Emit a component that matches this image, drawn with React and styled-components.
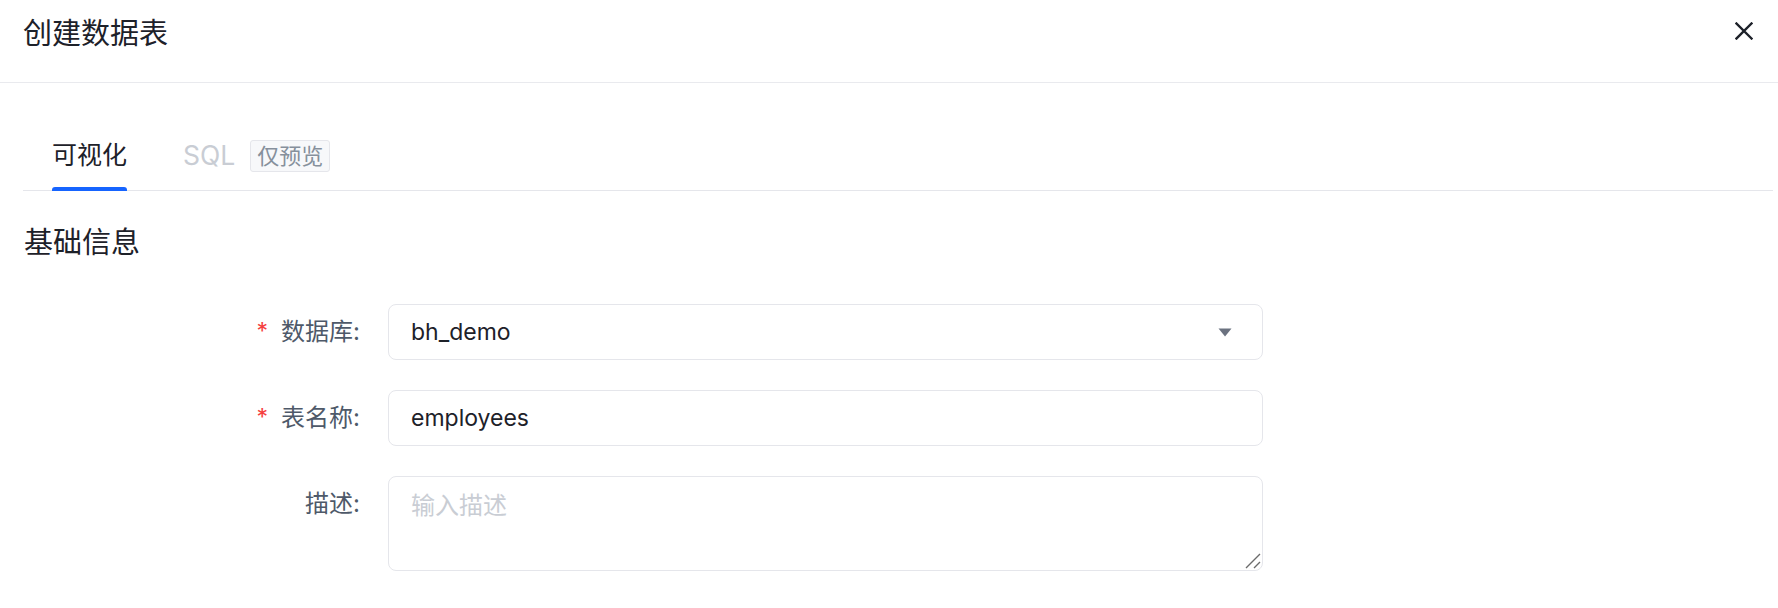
import React from "react";
import styled, { createGlobalStyle } from "styled-components";

const Global = createGlobalStyle`
  html, body { margin: 0; padding: 0; background: #fff; }
  body {
    font-family: Inter, "Noto Sans CJK SC", "Noto Sans", sans-serif;
    color: #1d2129;
  }
  * { box-sizing: border-box; }
`;

const Page = styled.div`
  width: 1778px;
  height: 608px;
  overflow: hidden;
  background: #fff;
`;

const Header = styled.header`
  height: 83px;
  padding: 14px 25px 0 23px;
  border-bottom: 1px solid #e9eaee;
  display: flex;
  justify-content: space-between;
  align-items: flex-start;
`;

const Title = styled.h1`
  margin: 0;
  font-size: 29px;
  line-height: 40px;
  font-weight: 400;
  color: #1d2129;
`;

const CloseButton = styled.button`
  border: 0;
  background: transparent;
  padding: 0;
  margin-top: 8px;
  width: 18px;
  height: 18px;
  display: flex;
  cursor: pointer;
`;

const Body = styled.div`
  padding: 54px 5px 0 23px;
`;

const TabList = styled.div`
  display: flex;
  align-items: flex-start;
  padding-left: 29px;
  border-bottom: 1px solid #e5e6eb;
`;

const Tab = styled.div`
  position: relative;
  display: flex;
  align-items: center;
  gap: 15px;
  font-size: 25px;
  line-height: 36px;
  padding-bottom: 17px;
  margin-right: 56px;
  color: ${(p) => (p.$active ? "#1d2129" : "#c9cdd4")};
  cursor: pointer;
`;

const TabLatin = styled.span`
  font-size: 26.5px;
`;

const TabIndicator = styled.span`
  position: absolute;
  left: 0;
  right: 0;
  bottom: -1px;
  height: 4px;
  border-radius: 3px 3px 0 0;
  background: #1664ff;
`;

const Badge = styled.span`
  display: inline-flex;
  align-items: center;
  height: 32px;
  padding: 0 6px;
  margin-top: 2px;
  font-size: 22px;
  color: #86909c;
  background: #f7f8fa;
  border: 1px solid #e5e6eb;
  border-radius: 3px;
`;

const SectionTitle = styled.h2`
  margin: 32px 0 0 1px;
  font-size: 29px;
  line-height: 40px;
  font-weight: 400;
  color: #1d2129;
`;

const Form = styled.div`
  margin-top: 41px;
  display: flex;
  flex-direction: column;
  gap: 30px;
`;

const Row = styled.div`
  display: flex;
  align-items: flex-start;
  gap: 28px;
`;

const Label = styled.label`
  width: 337px;
  display: flex;
  justify-content: flex-end;
  align-items: center;
  font-size: 24px;
  line-height: 56px;
  color: #4e5969;
`;

const Star = styled.span`
  color: #f53f3f;
  margin-right: 13px;
  font-size: 23px;
  position: relative;
  top: -1px;
`;

const Field = styled.div`
  width: 875px;
  height: 56px;
  display: flex;
  align-items: center;
  justify-content: space-between;
  padding: 0 30px 0 22px;
  border: 1px solid #e5e6eb;
  border-radius: 8px;
  font-size: 23px;
  color: #1d2129;
  background: #fff;
`;

const AreaWrap = styled.div`
  position: relative;
  width: 875px;
  height: 95px;
`;

const TextArea = styled.textarea`
  display: block;
  width: 100%;
  height: 100%;
  padding: 14px 22px;
  border: 1px solid #e5e6eb;
  border-radius: 8px;
  font-family: Inter, "Noto Sans CJK SC", sans-serif;
  font-size: 24px;
  line-height: 30px;
  color: #1d2129;
  resize: none;
  outline: none;
  &::placeholder { color: #c9cdd4; }
`;

const Grip = styled.svg`
  position: absolute;
  right: 2px;
  bottom: 2px;
  pointer-events: none;
`;

const Caret = () => (
  <svg width="14" height="9" viewBox="0 0 14 9">
    <path d="M0.5 0.5 H13.5 L7 8.5 Z" fill="#6b7280" />
  </svg>
);

export default function App() {
  return (
    <Page>
      <Global />
      <Header>
        <Title>创建数据表</Title>
        <CloseButton aria-label="关闭">
          <svg width="18" height="18" viewBox="0 0 18 18">
            <path d="M1.5 1.5 L16.5 16.5 M16.5 1.5 L1.5 16.5" stroke="#1d2129" strokeWidth="2.4" strokeLinecap="square" />
          </svg>
        </CloseButton>
      </Header>
      <Body>
        <TabList>
          <Tab $active>
            可视化
            <TabIndicator />
          </Tab>
          <Tab>
            <TabLatin>SQL</TabLatin>
            <Badge>仅预览</Badge>
          </Tab>
        </TabList>
        <SectionTitle>基础信息</SectionTitle>
        <Form>
          <Row>
            <Label><Star>*</Star>数据库:</Label>
            <Field>
              <span>bh_demo</span>
              <Caret />
            </Field>
          </Row>
          <Row>
            <Label><Star>*</Star>表名称:</Label>
            <Field>
              <span>employees</span>
            </Field>
          </Row>
          <Row>
            <Label>描述:</Label>
            <AreaWrap>
              <TextArea placeholder="输入描述" />
              <Grip width="16" height="16" viewBox="0 0 16 16">
                <path d="M15 1 L1 15 M15 9 L9 15" stroke="#6b6b6b" strokeWidth="1.4" />
              </Grip>
            </AreaWrap>
          </Row>
        </Form>
      </Body>
    </Page>
  );
}
